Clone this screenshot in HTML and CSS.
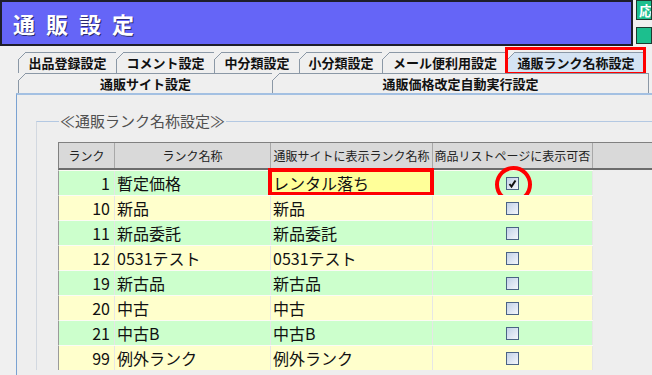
FILE: index.html
```html
<!DOCTYPE html>
<html lang="ja">
<head>
  <meta charset="UTF-8">
  <title>通販設定</title>
  <link rel="stylesheet" href="styles.css">
</head>
<body>
<div class="topbar">
  <div class="title">通販設定</div>
  <div class="side">
    <span class="sbtn">応</span>
    <span class="sbtn"></span>
  </div>
</div>

<div class="tabs">
  <div class="tabrow">
    <div class="tab" style="width:99px">出品登録設定</div>
    <div class="tab" style="width:99px">コメント設定</div>
    <div class="tab" style="width:86px">中分類設定</div>
    <div class="tab" style="width:84px">小分類設定</div>
    <div class="tab" style="width:126px">メール便利用設定</div>
    <div class="tab sel" style="width:138px">通販ランク名称設定<span class="mark-box"></span></div>
  </div>
  <div class="tabrow">
    <div class="tab" style="width:255px">通販サイト設定</div>
    <div class="tab" style="width:377px">通販価格改定自動実行設定</div>
  </div>
</div>

<div class="panel">
  <fieldset class="group">
    <legend>≪通販ランク名称設定≫</legend>
    <div class="grid">
      <div class="head">
        <div>ランク</div>
        <div>ランク名称</div>
        <div>通販サイトに表示ランク名称</div>
        <div>商品リストページに表示可否</div>
        <div></div>
      </div>
      <div class="row green">
        <div class="num">1</div><div>暫定価格</div>
        <div class="edit">レンタル落ち<span class="mark-cell"></span></div>
        <div class="chk"><span class="cb on"><svg width="11" height="11" viewBox="0 0 11 11"><path d="M2.5 6 L4.5 8.5 L8.5 2.5" fill="none" stroke="#111" stroke-width="2"/></svg><span class="mark-circle"></span></span></div>
      </div>
      <div class="row yellow">
        <div class="num">10</div><div>新品</div><div>新品</div>
        <div class="chk"><span class="cb"></span></div>
      </div>
      <div class="row green">
        <div class="num">11</div><div>新品委託</div><div>新品委託</div>
        <div class="chk"><span class="cb"></span></div>
      </div>
      <div class="row yellow">
        <div class="num">12</div><div>0531テスト</div><div>0531テスト</div>
        <div class="chk"><span class="cb"></span></div>
      </div>
      <div class="row green">
        <div class="num">19</div><div>新古品</div><div>新古品</div>
        <div class="chk"><span class="cb"></span></div>
      </div>
      <div class="row yellow">
        <div class="num">20</div><div>中古</div><div>中古</div>
        <div class="chk"><span class="cb"></span></div>
      </div>
      <div class="row green">
        <div class="num">21</div><div>中古B</div><div>中古B</div>
        <div class="chk"><span class="cb"></span></div>
      </div>
      <div class="row yellow">
        <div class="num">99</div><div>例外ランク</div><div>例外ランク</div>
        <div class="chk"><span class="cb"></span></div>
      </div>
    </div>
  </fieldset>
</div>
</body>
</html>
```

FILE: styles.css
```css
body { margin: 0; width: 652px; height: 375px; overflow: hidden; background: #f0f0f0; font-family: "Noto Sans CJK JP", sans-serif; color: #111; }

.topbar { display: flex; height: 46px; }
.title {
  width: 633px; box-sizing: border-box; border: 2px solid #1e1e2a; background: #6565f7;
  color: #fff; font-size: 22px; font-weight: bold; letter-spacing: 11px; line-height: 42px;
  padding-left: 11px; text-shadow: 1px 1px 0 #2a2a70;
}
.side { display: flex; flex-direction: column; gap: 7px; margin-left: 3px; }
.sbtn {
  width: 16px; height: 20px; box-sizing: border-box; border: 1px solid #1d3a30; background: #1cbf8e;
  color: #fff; font-size: 14px; font-weight: bold; line-height: 18px; padding-left: 2px; overflow: hidden;
}
.sbtn + .sbtn { height: 17px; }

.tabs { margin-top: 6px; padding-left: 18px; }
.tabrow { display: flex; }
.tabrow:first-child { height: 21px; }
.tabrow + .tabrow { height: 20px; }
.tab {
  position: relative; box-sizing: border-box; border: 1px solid #8b98a6; border-bottom: none;
  margin-right: -1px; background: #efefef; font-size: 13px; font-weight: bold; line-height: 20px;
  text-align: center; white-space: nowrap;
}
.tab::before {
  content: ""; position: absolute; left: -1px; top: -1px; width: 8px; height: 8px;
  background: linear-gradient(to bottom right, #f0f0f0 0 calc(50% - 0.6px), #8b98a6 calc(50% - 0.6px) calc(50% + 0.6px), transparent calc(50% + 0.6px));
}
.tab.sel { background: #d4e3f3; }
.mark-box { position: absolute; left: -3px; top: -6px; right: -2px; bottom: -2px; border: 3px solid #f00; }

.panel { box-sizing: border-box; margin-left: 16px; height: 282px; overflow: hidden; border-top: 2px solid #a3c0e2; border-left: 1px solid #7aa2d2; background: #eeeeee; padding-top: 16px; }
.group { margin: 0 0 0 19px; padding: 0 0 0 21px; border: 1px solid #b3c8e2; border-left-color: #d2d8e0; border-right: none; border-bottom: none; }
.group legend { margin-left: 1px; padding: 0 1px; font-size: 15px; line-height: 20px; color: #505050; }

.grid { margin-top: 11px; }
.head { display: grid; grid-template-columns: 56px 156px 162px 160px 1fr; height: 25px; border-top: 1px solid #808080; border-left: 1px solid #808080; border-bottom: 2px solid #6c6c6c; background: #d9d9d9; }
.head div { border-right: 1px solid #a8a8a8; font-size: 12px; line-height: 25px; text-align: center; white-space: nowrap; color: #222; }
.head div:last-child { border-right: none; }
.row { position: relative; display: grid; grid-template-columns: 56px 156px 162px 160px; width: 534px; height: 24px; border-top: 1px solid #fbfbf4; border-left: 1px solid #9a9a9a; }
.row div { position: relative; border-right: 1px solid #e6e6e6; font-size: 16px; line-height: 24px; padding-left: 2px; white-space: nowrap; }
.row .num { text-align: right; padding: 0 4px 0 0; }
.row .chk { display: flex; align-items: center; justify-content: center; padding: 0; }
.green { background: #ccffcc; }
.yellow { background: #ffffcc; }
.row .edit { background: #ffff99; }

.cb { position: relative; display: flex; align-items: center; justify-content: center; width: 13px; height: 13px; box-sizing: border-box; border: 1px solid #4a6385; background: linear-gradient(to bottom right, #c2d1e8, #f3f6fb); }
.mark-cell { position: absolute; left: -3px; top: -3px; right: -2px; bottom: -1px; border: 4px solid #f00; }
.mark-circle { position: absolute; left: -12px; top: -12px; width: 37px; height: 37px; box-sizing: border-box; border: 4px solid #f00; border-radius: 50%; }
```
